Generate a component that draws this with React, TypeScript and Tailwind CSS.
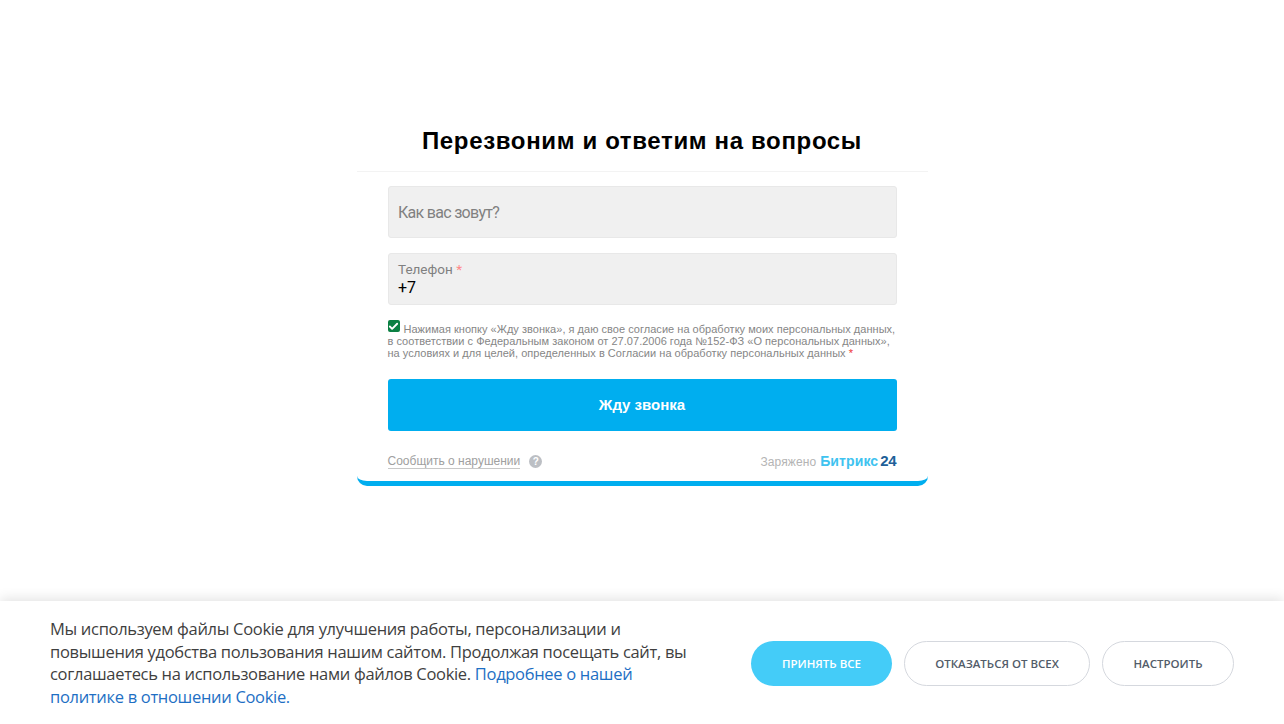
import { Check } from "lucide-react";

const sans = "font-['Liberation_Sans',Arial,sans-serif]";
const roboto = "font-['Roboto',sans-serif]";
const cookieFont = "font-['Open_Sans',sans-serif]";

function CallbackForm() {
  return (
    <div className={`w-[571px] mx-auto rounded-b-[10px] border-b-[5px] border-[#00aeef] ${sans}`}>
      <div className="h-[49px] border-b border-[#f3f3f3] text-center">
        <h1 className="text-[24px] leading-[36px] font-bold tracking-[0.65px] text-black">
          Перезвоним и ответим на вопросы
        </h1>
      </div>
      <div className="px-[31px] pt-[14px]">
        <div className={`h-[52px] flex items-center px-[9.5px] pt-[1px] rounded-[3px] bg-[#f0f0f0] border border-[#e8e8e8] text-[16px] tracking-[-0.7px] text-[#808080] ${roboto}`}>
          Как вас зовут?
        </div>
        <div className={`h-[52px] mt-[15px] px-[9.5px] pt-[7px] rounded-[3px] bg-[#f0f0f0] border border-[#e8e8e8] ${roboto}`}>
          <div className="text-[13.5px] leading-[17px] text-[#808080]">
            Телефон <span className="text-[#f88]">*</span>
          </div>
          <div className="text-[16px] leading-[20px] text-black">+7</div>
        </div>
        <div className="relative mt-[18px] text-[11px] leading-[12px] text-[#868686] tracking-[0.025px] whitespace-nowrap">
          <span className="absolute left-0 top-[-3px] flex w-[12px] h-[12px] items-center justify-center rounded-[2px] bg-[#0b8043]">
            <Check size={11} strokeWidth={4} color="#fff" />
          </span>
          <span className="inline-block w-[16px]" />
          Нажимая кнопку «Жду звонка», я даю свое согласие на обработку моих персональных данных,
          <br />
          в соответствии с Федеральным законом от 27.07.2006 года №152-ФЗ «О персональных данных»,
          <br />
          на условиях и для целей, определенных в Согласии на обработку персональных данных{" "}
          <span className="text-[#e33]">*</span>
        </div>
        <button className="mt-[20px] w-full h-[52px] rounded-[3px] bg-[#00aeef] text-white text-[15px] font-bold">
          Жду звонка
        </button>
        <div className="h-[50px] flex items-center justify-between pt-[10px]">
          <div className="flex items-center gap-[9px]">
            <span className="text-[12px] leading-[14px] text-[#a0a0a0] border-b border-[#c8c8c8]">
              Сообщить о нарушении
            </span>
            <span className="w-[13px] h-[13px] rounded-full bg-[#bcbfc4] text-white text-[10px] font-bold leading-[13px] text-center">
              ?
            </span>
          </div>
          <div className="flex items-baseline text-[#b4b4b4] text-[12px] tracking-[0.1px]">
            Заряжено
            <span className="ml-[4px] text-[14px] font-bold text-[#3fc3f0]">Битрикс</span>
            <span className="ml-[2px] text-[15px] tracking-[-0.2px] font-bold text-[#215f98]">24</span>
          </div>
        </div>
      </div>
    </div>
  );
}

function CookieBanner() {
  return (
    <div className={`h-[123px] pt-[2px] bg-white shadow-[0_-2px_12px_rgba(0,0,0,0.12)] flex items-center pl-[50px] ${cookieFont}`}>
      <p className="w-[660px] mb-[1px] text-[16.5px] leading-[22.5px] tracking-[-0.31px] text-[#3f3f3f]">
        Мы используем файлы Cookie для улучшения работы, персонализации и
        <br />
        повышения удобства пользования нашим сайтом. Продолжая посещать сайт, вы
        <br />
        соглашаетесь на использование нами файлов Cookie.{" "}
        <span className="text-[#1e6fc4]">Подробнее о нашей</span>
        <br />
        <span className="text-[#1e6fc4]">политике в отношении Cookie.</span>
      </p>
      <div className="flex items-center ml-[41px] gap-[12px] text-[11.5px] font-semibold">
        <button className="w-[141px] h-[45px] rounded-full bg-[#44ccf8] text-white">ПРИНЯТЬ ВСЕ</button>
        <button className="w-[186px] h-[45px] rounded-full bg-white border border-[#d5d8de] text-[#525c69]">
          ОТКАЗАТЬСЯ ОТ ВСЕХ
        </button>
        <button className="w-[132px] h-[45px] rounded-full bg-white border border-[#d5d8de] text-[#525c69]">
          НАСТРОИТЬ
        </button>
      </div>
    </div>
  );
}

export default function App() {
  return (
    <div className="w-full h-[724px] overflow-hidden bg-white flex flex-col">
      <div className="flex-1 pt-[123px]">
        <CallbackForm />
      </div>
      <CookieBanner />
    </div>
  );
}
